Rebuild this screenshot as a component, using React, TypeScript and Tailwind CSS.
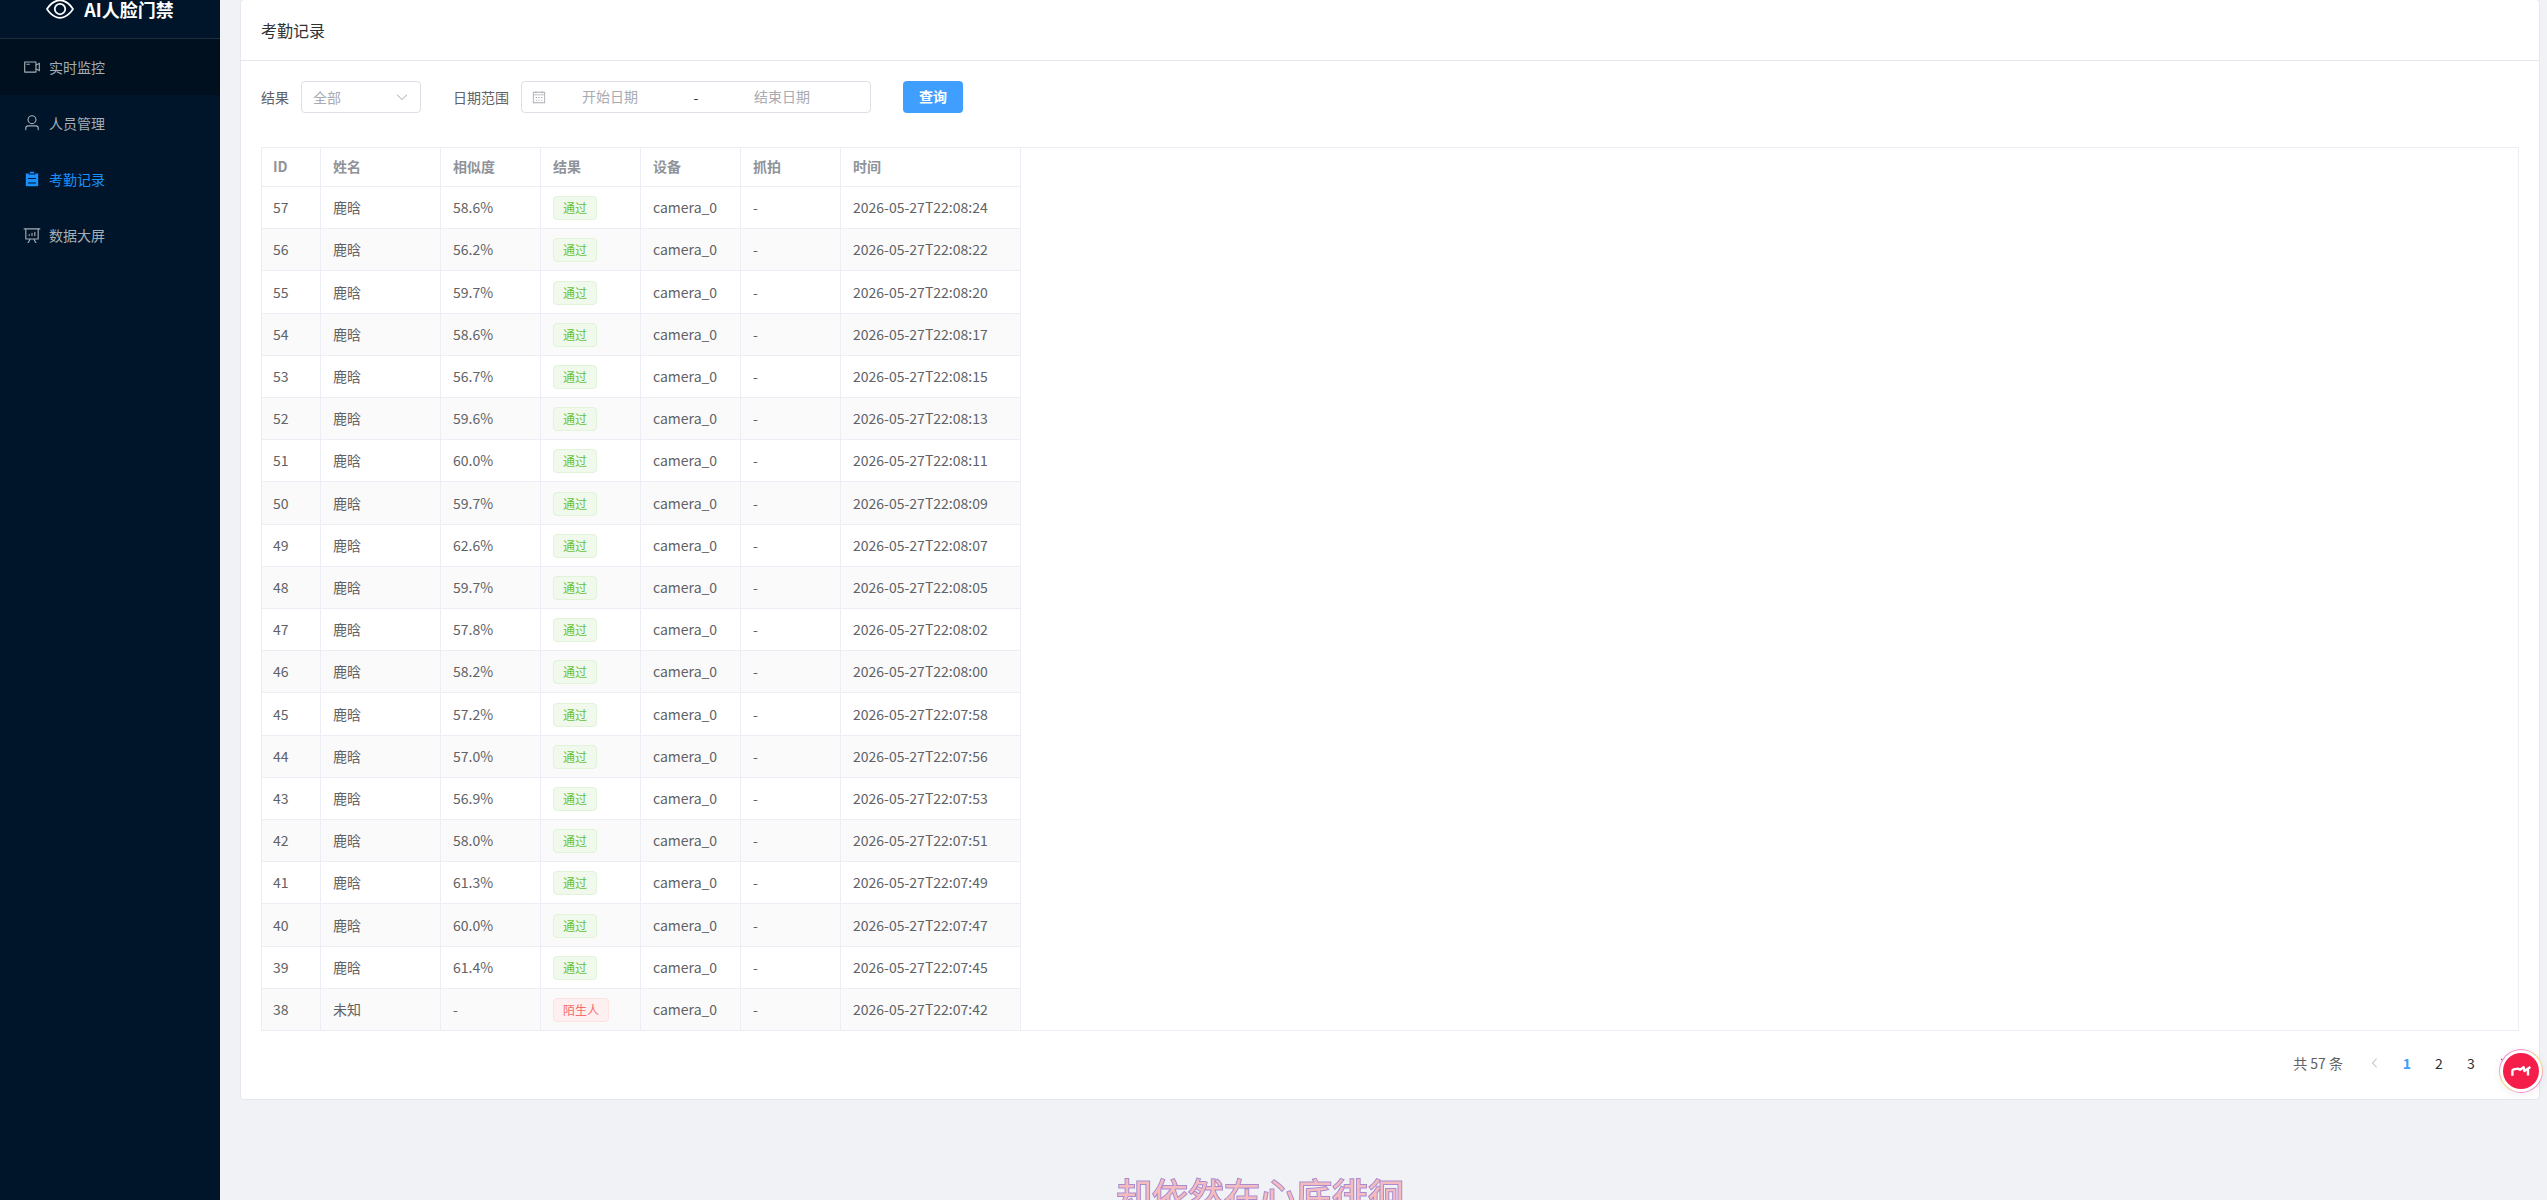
import { useState } from 'react';

const records = [
  { id: 57, score: '58.6%', time: '22:08:24' },
  { id: 56, score: '56.2%', time: '22:08:22' },
  { id: 55, score: '59.7%', time: '22:08:20' },
  { id: 54, score: '58.6%', time: '22:08:17' },
  { id: 53, score: '56.7%', time: '22:08:15' },
  { id: 52, score: '59.6%', time: '22:08:13' },
  { id: 51, score: '60.0%', time: '22:08:11' },
  { id: 50, score: '59.7%', time: '22:08:09' },
  { id: 49, score: '62.6%', time: '22:08:07' },
  { id: 48, score: '59.7%', time: '22:08:05' },
  { id: 47, score: '57.8%', time: '22:08:02' },
  { id: 46, score: '58.2%', time: '22:08:00' },
  { id: 45, score: '57.2%', time: '22:07:58' },
  { id: 44, score: '57.0%', time: '22:07:56' },
  { id: 43, score: '56.9%', time: '22:07:53' },
  { id: 42, score: '58.0%', time: '22:07:51' },
  { id: 41, score: '61.3%', time: '22:07:49' },
  { id: 40, score: '60.0%', time: '22:07:47' },
  { id: 39, score: '61.4%', time: '22:07:45' },
  { id: 38, score: null, time: '22:07:42' },
];

const icons = {
  view: 'M512 160c320 0 512 352 512 352S832 864 512 864 0 512 0 512s192-352 512-352m0 64c-225.28 0-384.128 208.064-436.8 288 52.608 79.872 211.456 288 436.8 288 225.28 0 384.128-208.064 436.8-288-52.608-79.872-211.456-288-436.8-288m0 64a224 224 0 1 1 0 448 224 224 0 0 1 0-448m0 64a160.19 160.19 0 0 0-160 160c0 88.192 71.744 160 160 160s160-71.808 160-160-71.744-160-160-160',
  camera: 'M704 768V256H128v512zm64-416 192-96v512l-192-96v128a32 32 0 0 1-32 32H96a32 32 0 0 1-32-32V224a32 32 0 0 1 32-32h640a32 32 0 0 1 32 32zm0 71.552v176.896l128 64V359.552zM192 320h192v64H192z',
  user: 'M512 512a192 192 0 1 0 0-384 192 192 0 0 0 0 384m0 64a256 256 0 1 1 0-512 256 256 0 0 1 0 512m320 320v-96a96 96 0 0 0-96-96H288a96 96 0 0 0-96 96v96a32 32 0 1 1-64 0v-96a160 160 0 0 1 160-160h448a160 160 0 0 1 160 160v96a32 32 0 1 1-64 0',
  list: 'M704 192h160v736H160V192h160v64h384zM288 512h448v-64H288zm0 256h448v-64H288zm96-576V96h256v96z',
  board: 'm665.216 768 110.848 192h-73.856L591.36 768H433.024L322.176 960H248.32l110.848-192H160a32 32 0 0 1-32-32V192H64a32 32 0 0 1 0-64h896a32 32 0 1 1 0 64h-64v544a32 32 0 0 1-32 32zM832 192H192v512h640zM352 448a32 32 0 0 1 32 32v64a32 32 0 0 1-64 0v-64a32 32 0 0 1 32-32m160-64a32 32 0 0 1 32 32v128a32 32 0 0 1-64 0V416a32 32 0 0 1 32-32m160-64a32 32 0 0 1 32 32v192a32 32 0 1 1-64 0V352a32 32 0 0 1 32-32',
  down: 'M831.872 340.864 512 652.672 192.128 340.864a30.592 30.592 0 0 0-42.752 0 29.12 29.12 0 0 0 0 41.6L489.664 714.24a32 32 0 0 0 44.672 0l340.288-331.712a29.12 29.12 0 0 0 0-41.728 30.592 30.592 0 0 0-42.752 0z',
  left: 'M609.408 149.376 277.76 489.6a32 32 0 0 0 0 44.672l331.648 340.352a29.12 29.12 0 0 0 41.728 0 30.592 30.592 0 0 0 0-42.752L339.264 511.936l311.872-319.872a30.592 30.592 0 0 0 0-42.688 29.12 29.12 0 0 0-41.728 0z',
  right: 'M340.864 149.312a30.592 30.592 0 0 0 0 42.752L652.736 512 340.864 831.872a30.592 30.592 0 0 0 0 42.752 29.12 29.12 0 0 0 41.728 0L714.24 534.336a32 32 0 0 0 0-44.672L382.592 149.376a29.12 29.12 0 0 0-41.728 0z',
  calendar: 'M128 384v512h768V192H768v32a32 32 0 1 1-64 0v-32H320v32a32 32 0 0 1-64 0v-32H128v128h768v64zm192-256h384V96a32 32 0 1 1 64 0v32h160a32 32 0 0 1 32 32v768a32 32 0 0 1-32 32H96a32 32 0 0 1-32-32V160a32 32 0 0 1 32-32h160V96a32 32 0 0 1 64 0zm-32 384h64a32 32 0 0 1 0 64h-64a32 32 0 0 1 0-64m0 192h64a32 32 0 1 1 0 64h-64a32 32 0 1 1 0-64m192-192h64a32 32 0 0 1 0 64h-64a32 32 0 0 1 0-64m0 192h64a32 32 0 1 1 0 64h-64a32 32 0 1 1 0-64m192-192h64a32 32 0 1 1 0 64h-64a32 32 0 1 1 0-64m0 192h64a32 32 0 1 1 0 64h-64a32 32 0 1 1 0-64',
};

function Icon({ name, className }: { name: keyof typeof icons; className: string }) {
  return (
    <svg viewBox="0 0 1024 1024" fill="currentColor" aria-hidden="true" className={`shrink-0 ${className}`}>
      <path d={icons[name]} />
    </svg>
  );
}

const menu: { icon: keyof typeof icons; label: string; color: string }[] = [
  { icon: 'camera', label: '实时监控', color: 'bg-[#00101f] text-[#a6adb4]' },
  { icon: 'user', label: '人员管理', color: 'text-[#a6adb4]' },
  { icon: 'list', label: '考勤记录', color: 'text-[#1890ff]' },
  { icon: 'board', label: '数据大屏', color: 'text-[#a6adb4]' },
];

function Sidebar() {
  return (
    <aside className="w-[220px] shrink-0 bg-[#001529]">
      <div className="flex h-[60px] items-center justify-center gap-2.5 border-b border-white/10 text-white">
        <Icon name="view" className="size-7" />
        <span className="text-lg font-bold">AI人脸门禁</span>
      </div>
      <nav>
        {menu.map((item) => (
          <a key={item.label} href="#" className={`flex h-14 items-center gap-[5px] px-5 text-sm ${item.color}`}>
            <span className="flex w-6 justify-center">
              <Icon name={item.icon} className="size-[18px]" />
            </span>
            {item.label}
          </a>
        ))}
      </nav>
    </aside>
  );
}

function FilterForm() {
  const [result, setResult] = useState('');

  return (
    <form className="flex flex-wrap items-center gap-8" onSubmit={(e) => e.preventDefault()}>
      <div className="flex items-center gap-3">
        <label htmlFor="result">结果</label>
        <div className="relative">
          <select
            id="result"
            value={result}
            onChange={(e) => setResult(e.target.value)}
            className="h-8 w-[120px] appearance-none rounded border border-[#dcdfe6] bg-white px-[11px] text-[#a8abb2] outline-none"
          >
            <option value="">全部</option>
            <option value="pass">通过</option>
            <option value="stranger">陌生人</option>
          </select>
          <Icon name="down" className="pointer-events-none absolute top-[9px] right-3 size-3.5 text-[#a8abb2]" />
        </div>
      </div>
      <div className="flex items-center gap-3">
        <label htmlFor="start">日期范围</label>
        <div className="flex h-8 w-[350px] items-center rounded border border-[#dcdfe6] bg-white px-2.5">
          <Icon name="calendar" className="size-3.5 text-[#a8abb2]" />
          <input
            id="start"
            placeholder="开始日期"
            className="h-full w-32 pb-0.5 text-center outline-none placeholder:text-[#a8abb2]"
          />
          <span className="flex-1 text-center text-[#303133]">-</span>
          <input
            aria-label="结束日期"
            placeholder="结束日期"
            className="mr-3.5 h-full w-32 pb-0.5 text-center outline-none placeholder:text-[#a8abb2]"
          />
        </div>
      </div>
      <button type="submit" className="h-8 w-[60px] rounded bg-[#409eff] pb-0.5 font-bold text-white">
        查询
      </button>
    </form>
  );
}

function RecordTable() {
  return (
    <div className="border border-[#ebeef5]">
      <table className="w-[759px] table-fixed border-separate border-spacing-0 text-left leading-[23px]">
        <colgroup>
          <col className="w-[59px]" />
          <col className="w-[120px]" />
          <col className="w-[100px]" />
          <col className="w-[100px]" />
          <col className="w-[100px]" />
          <col className="w-[100px]" />
          <col className="w-[180px]" />
        </colgroup>
        <thead className="text-[#909399]">
          <tr>
            {['ID', '姓名', '相似度', '结果', '设备', '抓拍', '时间'].map((title) => (
              <th
                key={title}
                className="border-r border-b border-[#ebeef5] px-3 pt-[7px] pb-2 font-bold first:pl-[11px]"
              >
                {title}
              </th>
            ))}
          </tr>
        </thead>
        <tbody>
          {records.map((row) => (
            <tr
              key={row.id}
              className="even:bg-[#fafafa] *:border-r *:border-b *:border-[#ebeef5] *:px-3 *:py-2 last:*:border-b-0"
            >
              <td className="first:pl-[11px]">{row.id}</td>
              <td>{row.score ? '鹿晗' : '未知'}</td>
              <td>{row.score ?? '-'}</td>
              <td>
                {row.score ? (
                  <span className="inline-flex h-6 items-center rounded border border-[#e1f3d8] bg-[#f0f9eb] px-[9px] align-middle text-xs text-[#67c23a]">
                    通过
                  </span>
                ) : (
                  <span className="inline-flex h-6 items-center rounded border border-[#fde2e2] bg-[#fef0f0] px-[9px] align-middle text-xs text-[#f56c6c]">
                    陌生人
                  </span>
                )}
              </td>
              <td>camera_0</td>
              <td>-</td>
              <td>2026-05-27T{row.time}</td>
            </tr>
          ))}
        </tbody>
      </table>
    </div>
  );
}

function Pagination() {
  const [page, setPage] = useState(1);

  return (
    <div className="mt-4 flex h-8 items-center justify-end">
      <span className="mr-4">共 57 条</span>
      <button aria-label="上一页" disabled={page === 1} className="flex size-8 items-center justify-center text-[#a8abb2]">
        <Icon name="left" className="size-3" />
      </button>
      {[1, 2, 3].map((n) => (
        <button
          key={n}
          onClick={() => setPage(n)}
          className={n === page ? 'size-8 font-bold text-[#409eff]' : 'size-8 text-[#303133]'}
        >
          {n}
        </button>
      ))}
      <button aria-label="下一页" className="flex size-8 items-center justify-center text-[#303133]">
        <Icon name="right" className="size-3" />
      </button>
    </div>
  );
}

export default function App() {
  return (
    <div className="h-screen overflow-hidden font-['Noto_Sans_CJK_SC',sans-serif] text-sm text-[#606266]">
      {/* page is scrolled down a little, so the top of the logo bar is cut */}
      <div className="-mt-[21px] flex min-h-[calc(100vh+21px)] bg-[#f0f2f5]">
        <Sidebar />
        <main className="min-w-0 flex-1 py-5 pr-[7px] pl-5">
          <section className="rounded border border-[#e4e7ed] bg-white">
            <h1 className="border-b border-[#e4e7ed] px-5 py-[18px] text-base text-[#303133]">考勤记录</h1>
            <div className="p-5">
              <FilterForm />
              <div className="mt-[34px]">
                <RecordTable />
              </div>
              <Pagination />
            </div>
          </section>
        </main>
      </div>

      {/* floating assistant ball */}
      <button
        aria-label="助手"
        className="fixed top-[1049px] right-1 size-11 rounded-full bg-[conic-gradient(#f08ad0,#f0e070_60deg,#f08ad0_120deg,#f08ad0_180deg,#f0e070_230deg,#f08ad0_290deg)] p-px shadow-[0_2px_10px_rgba(0,0,0,0.06)]"
      >
        <span className="flex size-full items-center justify-center rounded-full bg-white">
          <span className="flex size-9 items-center justify-center rounded-full bg-[#f51d4a]">
            <svg viewBox="0 0 20 10" className="h-2.5 w-5" fill="none" stroke="#fff" strokeWidth="2.4" strokeLinejoin="round">
              <path d="M1.4 9.8V4.8Q1.4 3.6 2.8 3.4L7 2.6 9 3.8 12.6 1.2 13.4 5 19.4 1M17 2.6V9.4" />
            </svg>
          </span>
        </span>
      </button>

      {/* desktop lyrics, partly below the edge */}
      <p className="pointer-events-none fixed -bottom-5 left-[1116px] text-4xl leading-[52px] text-[#f5bcbf] [-webkit-text-stroke:2px_#a98bd0] [paint-order:stroke_fill]">
        却依然在心底徘徊
      </p>
    </div>
  );
}
